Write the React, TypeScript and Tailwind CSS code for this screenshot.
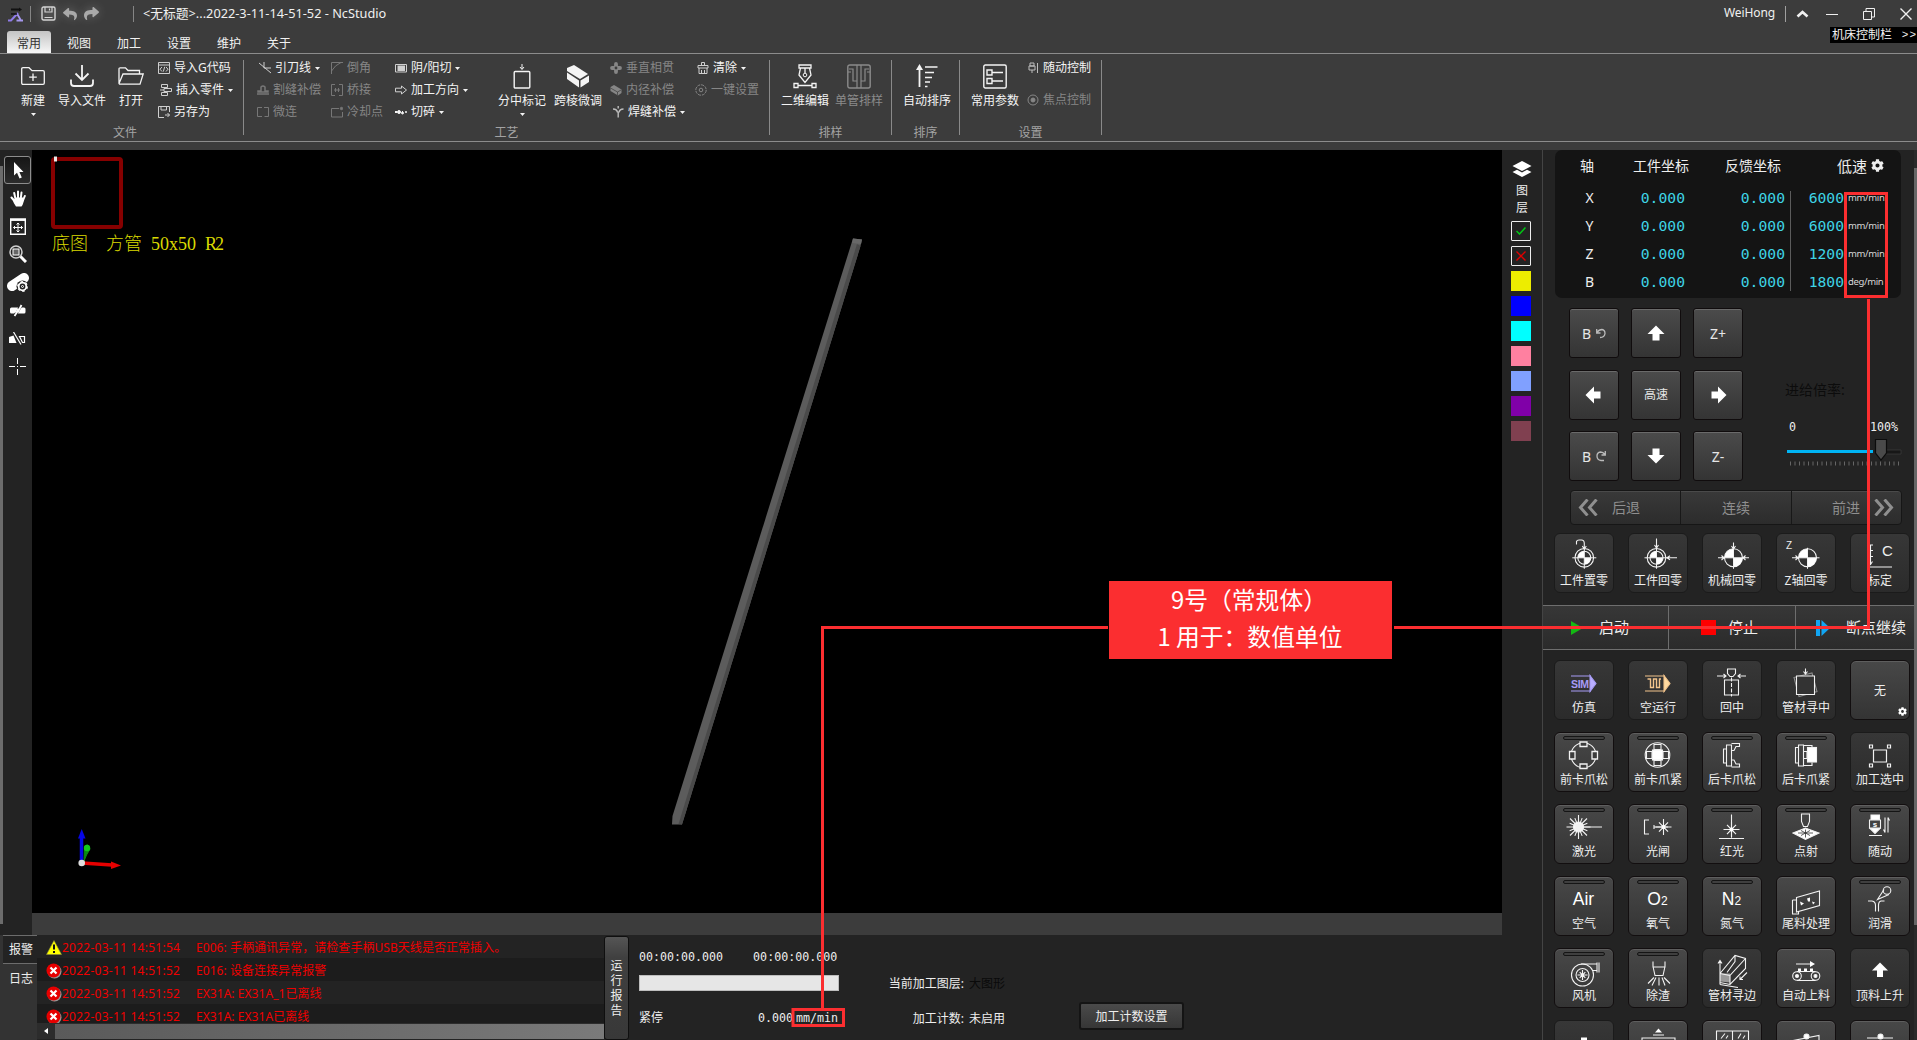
import React from "react";
import { FaReply, FaShare, FaCog } from "react-icons/fa";

type Kids = { children?: React.ReactNode };

const UI = "font-['Noto_Sans','Noto_Sans_CJK_SC',sans-serif]";
const MONO = "font-['DejaVu_Sans_Mono','Noto_Sans_CJK_SC',monospace]";

function Ico({ w, h, className, children }: { w: number; h: number; className?: string } & Kids) {
  return (
    <svg
      width={w}
      height={h}
      viewBox={`0 0 ${w} ${h}`}
      fill="none"
      stroke="currentColor"
      strokeWidth={1}
      className={"shrink-0 " + (className ?? "")}
    >
      {children}
    </svg>
  );
}

function Caret() {
  return (
    <Ico w={5} h={3}>
      <path d="M0 0H5L2.5 3Z" fill="currentColor" stroke="none" />
    </Ico>
  );
}

/* ---------- title bar ---------- */

function TitleBar() {
  return (
    <header className="flex h-[27px] shrink-0 items-center text-[#f0f0f0]">
      <Ico w={16} h={16} className="ml-2">
        <path d="M3 3.500H11" stroke="#111" strokeWidth={2} />
        <path d="M11 1.500L14 3.500L11 5.500Z" fill="#111" stroke="none" />
        <path d="M0 14.500H3L10 7" stroke="#8f7be8" strokeWidth={2} />
        <path d="M9.500 8.500L13 14.500M8.500 14.500H15" stroke="#a597ee" strokeWidth={1.800} />
        <path d="M3 8H9" stroke="#111" strokeWidth={1.500} />
      </Ico>
      <div className="ml-1.5 h-4 w-px bg-[#858585]" />
      <Ico w={15} h={15} className="ml-2.5 text-[#d4d4d4] drop-shadow-[0_0_5px_rgba(255,255,255,0.35)]">
        <rect x="1" y="1" width="13" height="13" rx="1.5" strokeWidth={1.4} />
        <path d="M4 1V6H11V1M8.5 2.5V4.5M3.5 11.5H11.5" strokeWidth={1.2} />
      </Ico>
      <FaReply size={14} className="ml-[7px] text-[#a9a9a9] drop-shadow-[0_0_5px_rgba(255,255,255,0.25)]" />
      <FaShare size={15} className="ml-[7px] text-[#a9a9a9] drop-shadow-[0_0_5px_rgba(255,255,255,0.25)]" />
      <div className="ml-[34px] h-4 w-px bg-[#858585]" />
      <span className="ml-[9px] pb-px text-[12.75px] leading-4">&lt;无标题&gt;...2022-3-11-14-51-52 - NcStudio</span>
      <div className="ml-auto flex items-center">
        <span className="pb-px text-xs leading-4 tracking-[-0.1px]">WeiHong</span>
        <div className="ml-[10px] h-4 w-px bg-[#a0a0a0]" />
        <Ico w={13} h={8} className="ml-2.5">
          <path d="M1.5 6.5L6.5 2L11.5 6.5" strokeWidth={2.6} />
        </Ico>
        <Ico w={12} h={12} className="ml-[17px]">
          <path d="M0 6.5H12" />
        </Ico>
        <Ico w={12} h={12} className="ml-[25px]">
          <path d="M.5 3.5H8.5V11.5H.5ZM3 3V.5H11.5V9H9" />
        </Ico>
        <Ico w={12} h={12} className="mr-[5px] ml-[25px]">
          <path d="M.5 .5L11.5 11.5M11.5 .5L.5 11.5" strokeWidth={1.4} />
        </Ico>
      </div>
    </header>
  );
}

function TabRow() {
  return (
    <nav className="flex h-[27px] shrink-0 items-end border-b border-[#8c8c8c] text-xs leading-4 text-[#f2f2f2]">
      <div className="ml-[7px] flex h-[22px] w-11 items-center justify-center rounded-t-[3px] bg-linear-to-b from-[#c4c4c4] to-[#f7f7f7] pt-[3px] text-[#333]">
        常用
      </div>
      <div className="ml-[3px] flex">
        {["视图", "加工", "设置", "维护", "关于"].map((t) => (
          <div key={t} className="flex h-[19px] w-[50px] items-center justify-center">
            {t}
          </div>
        ))}
      </div>
      <div className="ml-auto flex h-[26px] items-start">
        <div className="flex h-4 w-[87px] items-center justify-between bg-black pl-0.5 text-xs">
          <span>机床控制栏</span>
          <span className="font-['Liberation_Mono',monospace] text-[11px] tracking-[1px]">&gt;&gt;</span>
        </div>
      </div>
    </nav>
  );
}

/* ---------- ribbon ---------- */

function Group({ label, className, children }: { label: string; className: string } & Kids) {
  return (
    <section className={"flex h-full shrink-0 flex-col " + className}>
      <div className="flex h-[67px] shrink-0 items-start pt-[3px]">{children}</div>
      <div className="h-5 shrink-0 text-center text-xs leading-6 text-[#a3a3a3]">{label}</div>
    </section>
  );
}

function Sep() {
  return <div className="mt-1.5 h-[75px] w-px shrink-0 bg-[#8a8a8a]" />;
}

function Big({ icon, label, caret, dim, className }: { icon: React.ReactNode; label: string; caret?: boolean; dim?: boolean; className: string }) {
  return (
    <div className={"flex shrink-0 flex-col items-center pt-[5px] " + (dim ? "text-[#8b8b8b] " : "text-[#f4f4f4] ") + className}>
      <div className="flex h-[28px] items-center justify-center">{icon}</div>
      <span className="pt-px text-xs leading-5 whitespace-nowrap">{label}</span>
      {caret && (
        <span className="flex pt-0.5">
          <Caret />
        </span>
      )}
    </div>
  );
}

function Small({ icon, label, caret, dim, className }: { icon: React.ReactNode; label: string; caret?: boolean; dim?: boolean; className?: string }) {
  return (
    <div className={"flex h-[22px] items-center gap-1 text-xs whitespace-nowrap " + (dim ? "text-[#868686] " : "text-[#f4f4f4] ") + (className ?? "")}>
      {icon}
      <span className="leading-4">{label}</span>
      {caret && <Caret />}
    </div>
  );
}

const S = ({ children }: Kids) => (
  <Ico w={12} h={12} className="opacity-80">
    {children}
  </Ico>
);

function Ribbon() {
  return (
    <div className="flex h-[88px] shrink-0 border-b border-[#8c8c8c] pl-[7px]">
      <Group label="文件" className="w-[236px]">
        <Big
          className="ml-1 w-11"
          label="新建"
          caret
          icon={
            <Ico w={24} h={18}>
              <path d="M.7 2Q.7 .7 2 .7H8L11 3.7H22Q23.3 3.7 23.3 5V16Q23.3 17.3 22 17.3H2Q.7 17.3 .7 16ZM12 6.5V14M8.2 10.2H15.8" strokeWidth={1.3} />
            </Ico>
          }
        />
        <Big
          className="w-[54px]"
          label="导入文件"
          icon={
            <Ico w={24} h={24}>
              <path d="M12 1V16M5.5 9.5L12 16L18.5 9.5M1 15.5V19Q1 22 4 22H20Q23 22 23 19V15.5" strokeWidth={1.8} />
            </Ico>
          }
        />
        <Big
          className="w-11"
          label="打开"
          icon={
            <Ico w={26} h={18}>
              <path d="M1 16V2Q1 .8 2.2 .8H7.5L10 3.5H21.5V7M1 16.5L5 7H25.2L22 17.2H1.5Z" strokeWidth={1.3} />
            </Ico>
          }
        />
        <div className="ml-[5px] flex flex-col">
          <Small
            label="导入G代码"
            icon={
              <S>
                <path d="M.5 .5H11.5V11.5H.5ZM.5 3H11.5M4 5L2 7.2L4 9.5M8 5L10 7.2L8 9.5M6.7 4.8L5.3 9.6" />
              </S>
            }
          />
          <Small
            className="ml-0.5"
            label="插入零件"
            caret
            icon={
              <S>
                <path d="M1.5 .5H7.5V3.5H1.5ZM1.5 8.5H7.5V11.5H1.5ZM4 4.5H11.5V7.5H4ZM0 6H4" />
              </S>
            }
          />
          <Small
            label="另存为"
            icon={
              <S>
                <path d="M6 11.5H.5V.5H11.5V6M3 .5V4H8.5V.5M7 9H11.5M9.5 7L11.5 9L9.5 11" />
              </S>
            }
          />
        </div>
      </Group>
      <Sep />
      <Group label="工艺" className="w-[525px]">
        <div className="ml-[13px] flex w-[74px] flex-col">
          <Small
            className="ml-0.5"
            label="引刀线"
            caret
            icon={
              <S>
                <path d="M0 1L12 11M5 0V6H12" />
              </S>
            }
          />
          <Small
            dim
            label="割缝补偿"
            icon={
              <S>
                <path d="M1 7H4L4 3Q6 1 8 3V7H11V8H1ZM0 10H12" strokeWidth={1.5} />
              </S>
            }
          />
          <Small
            dim
            label="微连"
            icon={
              <S>
                <path d="M5 1.5H.5V10.5H5M7.5 10.5H11.5V1.5H7" />
              </S>
            }
          />
        </div>
        <div className="flex w-16 flex-col">
          <Small
            dim
            label="倒角"
            icon={
              <S>
                <path d="M.5 12V.5H12M.5 9Q4 3 10 .5" />
              </S>
            }
          />
          <Small
            dim
            label="桥接"
            icon={
              <S>
                <path d="M4 .5H.5V11.5H4M8 .5H11.5V11.5H8M3 6H9M4.5 4V8M7.5 4V8" />
              </S>
            }
          />
          <Small
            dim
            label="冷却点"
            icon={
              <S>
                <path d="M8 2.5H.5V11H11.5V6" />
                <circle cx="10.5" cy="2.5" r="1.2" fill="currentColor" />
              </S>
            }
          />
        </div>
        <div className="flex w-[99px] flex-col">
          <Small
            label="阴/阳切"
            caret
            icon={
              <S>
                <path d="M.5 2.5H11.5V10H.5Z" />
                <rect x="3" y="4" width="6.5" height="4.5" fill="currentColor" />
              </S>
            }
          />
          <Small
            label="加工方向"
            caret
            icon={
              <S>
                <path d="M.5 4.2H6.5V2L11.5 6L6.5 10V7.8H.5Z" />
              </S>
            }
          />
          <Small
            label="切碎"
            caret
            icon={
              <Ico w={12} h={12}>
                <path d="M0 6H2M3 6H5M7 6H8" strokeWidth={2} />
                <circle cx="4" cy="6" r="1.5" fill="currentColor" />
                <circle cx="7.5" cy="7" r="1" fill="currentColor" />
                <circle cx="11" cy="6" r=".6" fill="currentColor" />
              </Ico>
            }
          />
        </div>
        <Big
          className="w-14"
          label="分中标记"
          caret
          icon={
            <Ico w={18} h={25}>
              <rect x="1.2" y="7.5" width="15.6" height="16.5" rx="1" strokeWidth={1.4} />
              <path d="M9 0V5M7 3L9 5.5L11 3" />
            </Ico>
          }
        />
        <Big
          className="w-14"
          label="跨棱微调"
          icon={
            <Ico w={24} h={23}>
              <path d="M1 3L8 0L22 9L14 14L1 6Z" fill="currentColor" stroke="none" />
              <path d="M1 7.5L13 15.5V22.5L1 14ZM14.5 15.5L23 10.5V17L14.5 22.5Z" fill="currentColor" stroke="none" />
            </Ico>
          }
        />
        <div className="ml-1 flex w-[85px] flex-col">
          <Small
            dim
            label="垂直相贯"
            icon={
              <Ico w={12} h={12}>
                <path d="M6 2V10M2 6H10" strokeWidth={3.800} strokeLinecap="round" />
                <circle cx="6" cy="6" r="1.400" fill="#3c3c3c" stroke="none" />
              </Ico>
            }
          />
          <Small
            dim
            label="内径补偿"
            icon={
              <Ico w={12} h={12}>
                <path d="M.5 3L4 1L11.5 5.5V9L8 11.5L.5 7Z" fill="currentColor" stroke="none" />
                <path d="M.5 4L7.5 8V11M7.5 8L11 6" stroke="#3c3c3c" strokeWidth={0.7} />
              </Ico>
            }
          />
          <Small
            className="ml-0.5"
            label="焊缝补偿"
            caret
            icon={
              <Ico w={12} h={12} className="opacity-70">
                <path d="M1 3Q5 3 5.500 6.500M11.500 3Q7.500 3 7 6.500M6.200 5.500V11.500M6.200 0V2.500" strokeWidth={1.400} />
              </Ico>
            }
          />
        </div>
        <div className="flex flex-col">
          <Small
            className="ml-0.5"
            label="清除"
            caret
            icon={
              <S>
                <path d="M1 3.5H11V6H1ZM2 6V11.5H10V6M4.5 3V.5H7.5V3M4.5 8V11M7.5 8V11" />
              </S>
            }
          />
          <Small
            dim
            label="一键设置"
            icon={
              <Ico w={12} h={12}>
                <circle cx="6" cy="6" r="5.2" strokeDasharray="3 1" />
                <circle cx="6" cy="6" r="1.8" />
              </Ico>
            }
          />
        </div>
      </Group>
      <Sep />
      <Group label="排样" className="w-[121px]">
        <Big
          className="ml-[7px] w-14"
          label="二维编辑"
          icon={
            <Ico w={24} h={25}>
              <path d="M6 1H18V4H6ZM7.5 4L6 11L12 18.5L18 11L16.500 4M12 4V9M1 19.500H5V23.500H1ZM19 19.500H23V23.500H19ZM5 21.500H19" strokeWidth={1.3} />
              <circle cx="12" cy="11" r="1.8" />
            </Ico>
          }
        />
        <Big
          dim
          className="w-[52px]"
          label="单管排样"
          icon={
            <Ico w={24} h={25}>
              <rect x=".8" y="1" width="22.400" height="23" rx="2" strokeWidth={1.4} />
              <path d="M2 5H6V17H10V1M22 5H18V17H14V1M10 24V17M14 24V17M4 8H1M20 8H23" strokeWidth={1.2} />
            </Ico>
          }
        />
      </Group>
      <Sep />
      <Group label="排序" className="w-[67px]">
        <Big
          className="ml-[7px] w-14"
          label="自动排序"
          icon={
            <Ico w={22} h={24}>
              <path d="M3.500 23V4" strokeWidth={1.8} />
              <path d="M0 6L3.500 0L7 6Z" fill="currentColor" stroke="none" />
              <path d="M9 3H21.500M9 8.500H18M9 13.500H16M9 18H14M9 22.500H11.500" strokeWidth={1.6} />
            </Ico>
          }
        />
      </Group>
      <Sep />
      <Group label="设置" className="w-[141px]">
        <Big
          className="ml-[7px] w-14"
          label="常用参数"
          icon={
            <Ico w={24} h={25}>
              <rect x=".8" y="1" width="22.400" height="23" rx="1.500" strokeWidth={1.4} />
              <path d="M4 6H9V11H4ZM4 14.500H9V19.500H4ZM9 8.500H20M9 17H20" strokeWidth={1.4} />
            </Ico>
          }
        />
        <div className="ml-1 flex flex-col gap-2.5">
          <Small
            label="随动控制"
            icon={
              <Ico w={12} h={12} className="opacity-70">
                <path d="M3 1H7V4H3ZM2 4H8V8H2ZM5 8V11M10.500 1V11" />
              </Ico>
            }
          />
          <Small
            dim
            label="焦点控制"
            icon={
              <Ico w={12} h={12}>
                <circle cx="6" cy="6" r="5" />
                <circle cx="6" cy="6" r="2" fill="currentColor" />
              </Ico>
            }
          />
        </div>
      </Group>
      <Sep />
    </div>
  );
}

/* ---------- left tool strip ---------- */

function Tool({ active, children }: { active?: boolean } & Kids) {
  return (
    <div
      className={
        "flex h-7 w-[27px] items-center justify-center text-white " +
        (active ? "rounded-[3px] border border-[#8d8d8d] bg-linear-to-b from-[#161616] to-[#2c2c2c]" : "")
      }
    >
      {children}
    </div>
  );
}

function ToolStrip() {
  return (
    <aside className="flex w-[29px] shrink-0 flex-col items-center bg-[#232323] pt-1.5">
      <Tool active>
        <Ico w={11} h={17} className="ml-0.5">
          <path d="M1 0V13.500L4 10.800L6.500 16.500L8.800 15.500L6.400 10H10.500Z" fill="currentColor" stroke="none" />
        </Ico>
      </Tool>
      <Tool>
        <Ico w={16} h={17}>
          <path d="M4.500 11L1.500 7.500M5.500 9L4.200 3M8 8.500V1.500M10.700 9L11.500 2.500M13 10.500L14.800 6" strokeWidth={2} strokeLinecap="round" />
          <path d="M2 8L5 9.500L5 7.500H13L14 10Q13 15 11.500 16.500H6Q3.500 13.500 2 8Z" fill="currentColor" stroke="none" />
        </Ico>
      </Tool>
      <Tool>
        <Ico w={16} h={17}>
          <path d="M.7 2H15.300V16.300H.7Z" strokeWidth={1.400} />
          <path d="M0 1.500H16" strokeWidth={2.500} />
          <path d="M8 5V14M3.500 9.500H12.500M6.500 6.500L8 5L9.500 6.500M6.500 12.500L8 14L9.500 12.500M5 8L3.500 9.500L5 11M11 8L12.500 9.500L11 11" />
        </Ico>
      </Tool>
      <Tool>
        <Ico w={18} h={18}>
          <circle cx="7" cy="7" r="6" stroke="#d0d0d0" strokeWidth={1.500} />
          <rect x="4" y="4" width="6" height="6" fill="#666" />
          <path d="M11.500 11.500L17 17" strokeWidth={3} />
        </Ico>
      </Tool>
      <Tool>
        <Ico w={22} h={19} className="ml-px">
          <path d="M5 13L17 5" strokeWidth={10} strokeLinecap="round" />
          <circle cx="15.500" cy="13.500" r="6" fill="#232323" stroke="none" />
          <circle cx="15.500" cy="13.500" r="3.800" strokeWidth={1.800} />
          <circle cx="15.500" cy="13.500" r="4.800" strokeWidth={1.200} strokeDasharray="2.500 2.500" />
          <circle cx="15.500" cy="13.500" r="1" />
        </Ico>
      </Tool>
      <Tool>
        <Ico w={16} h={13}>
          <rect x="0" y="3.500" width="15.500" height="6" rx="1.500" fill="currentColor" stroke="none" />
          <path d="M4 13L12 0" stroke="#232323" strokeWidth={3} />
          <path d="M4.500 12L7.500 7.500L9 6L11.500 1M5 7.500H8L7 5.500H10.500" strokeWidth={1.800} />
        </Ico>
      </Tool>
      <Tool>
        <Ico w={17} h={13}>
          <path d="M0 11V5L4.500 3.500L7.500 11Z" fill="currentColor" stroke="none" />
          <path d="M4.500 0L12 12.500" strokeWidth={1.200} />
          <path d="M10.500 4.500H15.500V10.500H13.500Z" strokeWidth={1.200} />
        </Ico>
      </Tool>
      <Tool>
        <Ico w={17} h={17}>
          <path d="M8.500 0V6M8.500 11V17M0 8.500H6M11 8.500H17M8.500 8V9" />
        </Ico>
      </Tool>
    </aside>
  );
}

/* ---------- drawing canvas ---------- */

function Canvas() {
  return (
    <div className="relative h-[763px] bg-black">
      <svg width="1470" height="763" viewBox="32 150 1470 763" className="block" fill="none">
        <rect x="53" y="159" width="68" height="68" rx="2" stroke="#860000" strokeWidth="4" />
        <rect x="54" y="156.500" width="3" height="5" fill="#e8e8e8" />
        <path d="M853 238.500L862 239.500L860.500 246L682 824.500H672L672.500 816Z" fill="#5c5c5c" />
        <path d="M860.500 246L682 824.500L678.500 824L857 244Z" fill="#4a4a4a" />
        <path d="M853 238.500L862 239.500L861 244L852 243Z" fill="#686868" />
        <path d="M84 861L84.500 847Q88 842 90 849L86.500 855Z" fill="#0b8a12" stroke="#0b8a12" strokeWidth="1" />
        <circle cx="87" cy="848" r="3.200" fill="#13c61d" />
        <path d="M81.500 862V836" stroke="#0606e6" strokeWidth="3.500" />
        <path d="M78 838.500L81.700 829L85.500 838.500Z" fill="#0606e6" />
        <path d="M82 863L112 865" stroke="#e60000" strokeWidth="3.500" />
        <path d="M111 861.500L121 865.500L111 869Z" fill="#e60000" />
        <circle cx="81.700" cy="863" r="3.300" fill="#dedede" />
      </svg>
      <div className="absolute top-[82px] left-[20px] font-['Liberation_Serif','Noto_Sans_CJK_SC',serif] text-[18px] leading-6 font-light whitespace-pre text-[#d9d900] [word-spacing:4.5px]">
        底图{"  "}方管 50x50 <span className="tracking-[-2px]">R</span>2
      </div>
    </div>
  );
}

const swatches = [
  "bg-[#eded00]",
  "bg-[#0000ff]",
  "bg-[#00ffff]",
  "bg-[#ff80a0]",
  "bg-[#80a0ff]",
  "bg-[#8000a8]",
  "bg-[#804050]",
];

function LayerColumn() {
  return (
    <aside className="flex w-10 shrink-0 flex-col bg-[#232323] pl-[9px] text-white">
      <Ico w={20} h={17} className="mt-[11px] ml-px">
        <path d="M10 0L19.500 5L10 10L.5 5Z" fill="currentColor" stroke="none" />
        <path d="M.5 11L5 8.800L10 11.500L15 8.800L19.500 11L10 16Z" fill="currentColor" stroke="none" />
      </Ico>
      <div className="mt-1 ml-[5px] w-3 text-xs leading-[17px] text-[#eee]">图层</div>
      <div className="mt-[5px] flex flex-col gap-[5px]">
        <div className="flex size-5 items-center justify-center rounded-[1px] border border-[#eee]">
          <Ico w={10} h={8} className="text-[#00c814]">
            <path d="M.5 4L3.500 7L9.500 .5" strokeWidth={1.500} />
          </Ico>
        </div>
        <div className="flex size-5 items-center justify-center rounded-[1px] border border-[#eee]">
          <Ico w={10} h={10} className="text-[#e00000]">
            <path d="M.5 .5L9.500 9.500M9.500 .5L.5 9.500" strokeWidth={1.400} />
          </Ico>
        </div>
        {swatches.map((c) => (
          <div key={c} className={"size-5 " + c} />
        ))}
      </div>
    </aside>
  );
}

/* ---------- bottom panel ---------- */

const logs = [
  { warn: true, time: "2022-03-11 14:51:54", msg: "E006: 手柄通讯异常，请检查手柄USB天线是否正常插入。" },
  { warn: false, time: "2022-03-11 14:51:52", msg: "E016: 设备连接异常报警" },
  { warn: false, time: "2022-03-11 14:51:52", msg: "EX31A: EX31A_1已离线" },
  { warn: false, time: "2022-03-11 14:51:52", msg: "EX31A: EX31A已离线" },
];

function BottomPanel() {
  return (
    <div className="flex h-[105px] w-[1542px] bg-[#232323] text-xs text-[#eee]">
      <div className="flex w-[37px] shrink-0 flex-col bg-[#333] pl-[3px] leading-4">
        <div className="flex h-[29px] items-center justify-center border-y border-[#6c6c6c] bg-[#232323] pl-0.5">报警</div>
        <div className="flex h-[30px] items-center justify-center pl-0.5">日志</div>
      </div>
      <div className="flex w-[567px] shrink-0 flex-col overflow-hidden text-[#f00000]">
        <div className="h-[88px] overflow-hidden">
          {logs.map((l, i) => (
            <div key={i} className={"flex h-[23px] items-center pt-0.5 pl-[9px] whitespace-nowrap " + (i % 2 ? "bg-[#1c1c1c]" : "bg-[#232323]")}>
              {l.warn ? (
                <Ico w={16} h={16}>
                  <path d="M8 .5L15.500 14.500H.5Z" fill="#ffff00" stroke="#8a8a40" strokeWidth={0.600} />
                  <path d="M8 4.500V9.500M8 11V13" stroke="#111" strokeWidth={2} />
                </Ico>
              ) : (
                <Ico w={16} h={16}>
                  <circle cx="8.500" cy="8.500" r="7" fill="#999" stroke="none" />
                  <circle cx="7.500" cy="7.500" r="7" fill="#e60000" stroke="none" />
                  <path d="M4.500 4.500L10.500 10.500M10.500 4.500L4.500 10.500" stroke="#fff" strokeWidth={2.200} />
                </Ico>
              )}
              <span className="w-[134px] tracking-[0.25px]">{l.time}</span>
              <span className="tracking-[0.05px]">{l.msg}</span>
            </div>
          ))}
        </div>
        <div className="flex h-4 items-center bg-[#2c2c2c] text-white">
          <Ico w={4} h={6} className="ml-[7px]">
            <path d="M4 0V6L0 3Z" fill="currentColor" stroke="none" />
          </Ico>
          <div className="ml-[7px] h-[15px] flex-1 bg-linear-to-r from-[#5a5a5a] to-[#7a7a7a]" />
        </div>
      </div>
      <div className="mt-px flex h-[104px] w-[25px] shrink-0 items-center justify-center rounded-[3px] border border-[#0f0f0f] bg-linear-to-b from-[#555] via-[#404040] via-20% to-[#383838]">
        <span className="w-3 text-xs leading-[15px]">运行报告</span>
      </div>
      <div className="ml-[10px] flex w-[230px] shrink-0 flex-col">
        <div className={"mt-[14px] flex gap-[30px] text-[11.650px] leading-4 " + MONO}>
          <span>00:00:00.000</span>
          <span>00:00:00.000</span>
        </div>
        <div className="mt-2.5 h-4 w-[200px] border border-[#bdbdbd] bg-[#e6e6e6]" />
        <div className="mt-[19px] flex items-center leading-4">
          <span>紧停</span>
          <span className={"ml-auto flex w-[111px] text-[11.650px] " + MONO}>
            <span className="w-[38px]">0.000</span>
            <span>mm/min</span>
          </span>
        </div>
      </div>
      <div className="ml-[20px] flex w-[116px] shrink-0 flex-col pt-[41px] leading-4 whitespace-nowrap">
        <div className="flex justify-end gap-[5px]">
          <span>当前加工图层:</span>
          <span className="w-9 text-[#0a0a0a]">大图形</span>
        </div>
        <div className="mt-[19px] flex justify-end gap-[5px]">
          <span>加工计数:</span>
          <span className="w-9">未启用</span>
        </div>
      </div>
      <div className="mt-[67px] ml-[74px] flex h-7 w-[105px] items-center justify-center rounded-[3px] border-2 border-[#141414] bg-linear-to-b from-[#4a4a4a] to-[#363636] pt-0.5">
        加工计数设置
      </div>
    </div>
  );
}

/* ---------- right control panel ---------- */

const axes = [
  ["X", "0.000", "0.000", "6000", "mm/min"],
  ["Y", "0.000", "0.000", "6000", "mm/min"],
  ["Z", "0.000", "0.000", "1200", "mm/min"],
  ["B", "0.000", "0.000", "1800", "deg/min"],
];

function AxisPanel() {
  return (
    <div className="ml-[12px] h-[148px] w-[346px] shrink-0 rounded-[7px] bg-[#141414] text-[#eee]">
      <div className="flex h-[31px] items-center text-sm leading-5">
        <span className="ml-[25px] w-[53px]">轴</span>
        <span className="w-[92px]">工件坐标</span>
        <span className="w-28">反馈坐标</span>
        <span className="mr-1 text-[15px]">低速</span>
        <FaCog size={13} />
      </div>
      <div className="relative pt-px">
        <div className="absolute top-[10px] left-[235px] h-[100px] w-px bg-[#5c5c5c]" />
        {axes.map((a) => (
          <div key={a[0]} className={"flex h-7 items-center pt-1 text-[14.700px] text-[#3fd5e6] " + MONO}>
            <span className={"ml-[25px] w-[19px] text-center text-sm text-[#eee] " + UI}>{a[0]}</span>
            <span className="w-[86px] text-right">{a[1]}</span>
            <span className="w-[100px] text-right">{a[2]}</span>
            <span className="w-[59px] text-right">{a[3]}</span>
            <span className="ml-1 font-['Noto_Sans',sans-serif] text-[9.500px] tracking-[-0.35px] text-[#d8d8d8]">{a[4]}</span>
          </div>
        ))}
      </div>
    </div>
  );
}

function Key({ children }: Kids) {
  return (
    <div className="flex size-[50px] items-center justify-center gap-[5px] rounded-[3px] border border-[#100c0d] bg-linear-to-b from-[#4b4b4b] to-[#343434] text-[14px] text-[#e6e6e6] shadow-[inset_0_1px_0_#6a6a6a]">
      {children}
    </div>
  );
}

const arrowTurns = { up: "", right: "ml-0.5 rotate-90", down: "rotate-180", left: "mr-[3px] -rotate-90" };

function Arrow({ dir }: { dir: keyof typeof arrowTurns }) {
  return (
    <Ico w={18} h={16} className={"text-white " + arrowTurns[dir]}>
      <path d="M9 .5L17.500 9H12.500V15.500H5.500V9H.5Z" fill="currentColor" stroke="none" />
    </Ico>
  );
}

function Jog() {
  return (
    <div className="mt-[10px] flex shrink-0 pl-[26px]">
      <div className="grid grid-cols-3 gap-x-3 gap-y-[11.500px]">
        <Key>
          <span>B</span>
          <Ico w={10} h={11} className="text-[#bbb]">
            <path d="M.7 1V5H4.500M1 4.500Q3 1.500 6 1.500Q9 2 9 5.500Q8.500 9.500 4 9.500" strokeWidth={1.300} />
          </Ico>
        </Key>
        <Key>
          <Arrow dir="up" />
        </Key>
        <Key>Z+</Key>
        <Key>
          <Arrow dir="left" />
        </Key>
        <Key>
          <span className="text-xs">高速</span>
        </Key>
        <Key>
          <Arrow dir="right" />
        </Key>
        <Key>
          <span>B</span>
          <Ico w={10} h={11} className="text-[#bbb]">
            <path d="M9.300 0V4H5.500M9 3.500Q7 1 4.500 1Q1 1.500 1 5Q1 9 5 9.500H8" strokeWidth={1.300} />
          </Ico>
        </Key>
        <Key>
          <Arrow dir="down" />
        </Key>
        <Key>Z-</Key>
      </div>
      <div className="ml-[42px] flex w-[120px] flex-col pt-[73px]">
        <span className="text-sm leading-[18px] text-[#0c0c0c]">进给倍率:</span>
        <div className={"mt-5 flex w-[113px] justify-between pl-[4px] text-[11.650px] leading-4 text-[#eee] " + MONO}>
          <span>0</span>
          <span>100%</span>
        </div>
        <Ico w={118} h={30} className="mt-0.5">
          <path d="M98 13H116V17H98" fill="#171717" stroke="#3a3a3a" strokeWidth={0.800} />
          <path d="M2 14.500H88" stroke="#00b4f4" strokeWidth={3} />
          <path d="M90.500 2.500H101.500V16L96 23L90.500 16Z" fill="#4a4a4a" stroke="#0c0c0c" strokeWidth={1.200} />
          <path d="M5 26.500H115" stroke="#666" strokeWidth={4} strokeDasharray="1 3.500" />
        </Ico>
      </div>
    </div>
  );
}

const TILE_FLAT = "border-[#1b1b1b] bg-linear-to-b from-[#373737] to-[#2b2b2b]";
const TILE_RAISED = "border-[#120e0f] bg-linear-to-b from-[#484848] to-[#343434] shadow-[inset_0_1px_0_#5e5e5e]";

type TileProps = { label: string; icon?: React.ReactNode; raised?: boolean; led?: boolean };

function Tile({ label, icon, raised, led }: TileProps) {
  return (
    <div className={"relative h-[60px] w-[60px] overflow-hidden rounded-[6px] border " + (raised || led ? TILE_RAISED : TILE_FLAT)}>
      {led && <div className="absolute top-[3px] left-[8px] h-[4px] w-[42px] rounded-[2px] border border-[#151515] bg-[#3f3f3f]" />}
      <svg width="58" height="39" viewBox="1 0.500 58 39" fill="none" stroke="#f2f2f2" strokeWidth="1.100" className="block">
        {icon}
      </svg>
      <div className="text-center text-xs leading-[15px] whitespace-nowrap text-[#eee]">{label}</div>
    </div>
  );
}

function Target({ x, y, rings }: { x: number; y: number; rings?: boolean }) {
  const r = rings ? 6.5 : 9;
  return (
    <g transform={`translate(${x} ${y})`}>
      {rings && <circle r="9.300" />}
      <circle r={r} />
      <path d={`M0 0V${-r}A${r} ${r} 0 0 0 ${-r} 0ZM0 0V${r}A${r} ${r} 0 0 0 ${r} 0Z`} fill="#fff" stroke="none" />
      <path d="M-12 0H12M0 -10V11" strokeWidth="1" />
    </g>
  );
}

function Star({ x, y, r, n }: { x: number; y: number; r: number; n: number }) {
  let d = "";
  for (let i = 0; i < n; i++) {
    const a = (Math.PI * 2 * i) / n;
    const k = i % 2 ? r * 0.8 : r;
    d += `M${x} ${y}L${(x + Math.cos(a) * k).toFixed(2)} ${(y + Math.sin(a) * k).toFixed(2)}`;
  }
  return <path d={d} />;
}

const zeroTiles: TileProps[] = [
  {
    label: "工件置零",
    icon: (
      <>
        <Target x={30.3} y={24.3} rings />
        <path d="M22.500 11V8Q23 6.500 25 6.500H27.500Q30.300 6.500 30.300 10V15M28.300 12.500L30.300 15.500L32.300 12.500" />
      </>
    ),
  },
  {
    label: "工件回零",
    icon: (
      <>
        <Target x={28.5} y={24.3} rings />
        <path d="M28.500 5V14M26.500 11.500L28.500 14.500L30.500 11.500M49 24.300H39M42 22.300L39 24.300L42 26.300" />
      </>
    ),
  },
  {
    label: "机械回零",
    icon: (
      <>
        <Target x={31.5} y={24.3} />
        <path d="M31.500 9V15M29.500 12.500L31.500 15.500L33.500 12.500M16 24.300H22M19.500 22L22 24.300L19.500 26.500M47 24.300H41M43.500 22L41 24.300L43.500 26.500" />
      </>
    ),
  },
  {
    label: "Z轴回零",
    icon: (
      <>
        <Target x={31.5} y={24.3} />
        <path d="M16 24.300H22M19.500 22L22 24.300L19.500 26.500" />
        <text x="10" y="15" fill="#eee" stroke="none" fontSize="10" fontFamily="Liberation Sans">
          Z
        </text>
      </>
    ),
  },
  {
    label: "标定",
    icon: (
      <>
        <path d="M20.500 11V31M20.500 11.500H23M20.500 17H23M20.500 23H23M18.500 28L20.500 31L22.500 28M19 33.500H42" />
        <text x="32" y="22" fill="#eee" stroke="none" fontSize="15" fontFamily="Liberation Sans">
          C
        </text>
      </>
    ),
  },
];

const gas = (t: string, sub?: string) => (
  <text x="29.500" y="28.500" textAnchor="middle" fill="#fff" stroke="none" fontSize="17.500" fontFamily="Liberation Sans">
    {t}
    {sub && <tspan fontSize="12">{sub}</tspan>}
  </text>
);

const tiles: (TileProps & { plain?: boolean })[] = [
  {
    label: "仿真",
    icon: (
      <g stroke="#a79bf5">
        <path d="M17 15.500H37M17 30.500H37" />
        <path d="M36 15L42 23L36 31Z" fill="#b9aeff" />
        <text x="17" y="27" fill="#a79bf5" stroke="none" fontSize="10.500" fontWeight="bold" fontFamily="Liberation Sans" textLength="18">
          SIM
        </text>
      </g>
    ),
  },
  {
    label: "空运行",
    icon: (
      <g stroke="#f2c48c">
        <path d="M17 15.500H37M17 30.500H37" />
        <path d="M36 15L42 23L36 31Z" fill="#ffd9a0" />
        <path d="M19.500 18.500H22.500V27H25.500V18.500H28.500V27H31.500V18.500H33" strokeWidth="1.400" />
      </g>
    ),
  },
  {
    label: "回中",
    icon: (
      <>
        <path d="M25.500 8.500H33.500V13L31 16H28L25.500 13ZM22.500 19.500H36.500V34.500H22.500ZM15 15.500H24M21.500 13.500L24 15.500L21.500 17.500M44 15.500H36M38.500 13.500L36 15.500L38.500 17.500" />
        <path d="M29.500 17V36" strokeDasharray="4 1.500" />
      </>
    ),
  },
  {
    label: "管材寻中",
    icon: (
      <>
        <path d="M18 17L36 12.500L41 31L23 36Z" stroke="#8c8c8c" />
        <path d="M20.500 15.500H38.500V34H20.500Z" fill="#333" />
        <path d="M29.500 8V13.500M27.500 11L29.500 13.500L31.500 11" />
      </>
    ),
  },
  { label: "无", plain: true, raised: true },
  {
    label: "前卡爪松",
    led: true,
    icon: (
      <>
        <circle cx="29.500" cy="22.700" r="12.500" />
        <path d="M26 9.500H33V14H26ZM26 31.500H33V36H26ZM15.500 19H21V26.500H15.500ZM38 19H43.500V26.500H38Z" fill="#3c3c3c" strokeWidth="1.300" />
      </>
    ),
  },
  {
    label: "前卡爪紧",
    led: true,
    icon: (
      <>
        <circle cx="29.500" cy="22.500" r="12.300" />
        <path d="M26 12H33V17H26ZM26 28H33V33H26ZM18.500 19H24V26H18.500ZM35 19H40.500V26H35Z" />
        <rect x="24.500" y="17.500" width="10" height="10" fill="#fff" />
      </>
    ),
  },
  {
    label: "后卡爪松",
    led: true,
    icon: <path d="M21.500 16.500H24.500V30.500H21.500ZM24.500 12.500H29.500V33.500H24.500ZM29.500 11H37.500V14H34L32 18H29.500M29.500 34.500H37.500V31.500H34L32 27.500H29.500" />,
  },
  {
    label: "后卡爪紧",
    led: true,
    icon: (
      <>
        <path d="M19.500 15H22.500V30.500H19.500ZM22.500 12.500H27.500V33.500H22.500ZM27.500 13H36V15M27.500 33H36V30M27.500 19H31V26H27.500" />
        <rect x="31.500" y="15" width="9" height="14.500" fill="#fff" />
      </>
    ),
  },
  {
    label: "加工选中",
    icon: (
      <path d="M23.500 17.500H36.500V29.500H23.500ZM19.500 12.500H22.500V15.500H19.500ZM37.500 12.500H40.500V15.500H37.500ZM19.500 31.500H22.500V34.500H19.500ZM37.500 31.500H40.500V34.500H37.500Z" strokeWidth="1.200" />
    ),
  },
  {
    label: "激光",
    led: true,
    icon: (
      <>
        <circle cx="24.500" cy="22.500" r="5" fill="#fff" />
        <Star x={24.5} y={22.5} r={12} n={16} />
        <path d="M24 22.500H48" />
      </>
    ),
  },
  {
    label: "光闸",
    led: true,
    icon: (
      <>
        <path d="M21 15.500H16.500V29.500H21M26 22.500H40M26 20.500V24.500" />
        <Star x={35.5} y={22.5} r={8} n={8} />
        <circle cx="35.500" cy="22.500" r="2" fill="#fff" stroke="none" />
      </>
    ),
  },
  {
    label: "红光",
    led: true,
    icon: (
      <>
        <path d="M29.500 10V33M17 34H42" />
        <Star x={29.5} y={25} r={8} n={8} />
        <circle cx="29.500" cy="25" r="2" fill="#fff" stroke="none" />
      </>
    ),
  },
  {
    label: "点射",
    led: true,
    icon: (
      <>
        <path d="M25.500 9.500H33.500V17L31.500 22H27.500L25.500 17Z" />
        <path d="M17 28.500L29.500 23.500L43 28.500L29.500 35Z" fill="#fff" />
        <path d="M22 28.500H37M25 26L34 31M34 26L25 31M29.500 25V33" stroke="#333" strokeWidth=".8" />
      </>
    ),
  },
  {
    label: "随动",
    led: true,
    icon: (
      <>
        <path d="M21 10.500H29.500V15H21ZM20 24H30L25 29Z" fill="#fff" />
        <path d="M19.500 15.500H30.500V23.500H19.500ZM19 31H32M35 13V28M38 13V28M35 28L33.500 25M38 13L39.500 16" />
        <text x="22.800" y="22.500" fill="#fff" stroke="none" fontSize="8" fontWeight="bold" fontFamily="Liberation Sans">
          s
        </text>
      </>
    ),
  },
  { label: "空气", led: true, icon: gas("Air") },
  { label: "氧气", led: true, icon: gas("O", "2") },
  { label: "氮气", led: true, icon: gas("N", "2") },
  {
    label: "尾料处理",
    raised: true,
    icon: (
      <>
        <path d="M20.500 21L43.500 14.500V29L20.500 35.500ZM16.500 23.500H20.500M16.500 23.500V37.500H22.500V35" />
        <path d="M24 25L28 27L25 29ZM31 22L34 21V25H32ZM36 25L39 26L37 28Z" fill="#fff" stroke="none" />
      </>
    ),
  },
  {
    label: "润滑",
    led: true,
    icon: (
      <>
        <circle cx="37" cy="14" r="3.800" />
        <path d="M34 13L27.500 23L39 18M18 24.500H22Q25.500 25 25.500 29V35M34.500 24.500H31Q28.500 25 28.500 29V35" />
      </>
    ),
  },
  {
    label: "风机",
    led: true,
    icon: (
      <>
        <circle cx="28.500" cy="26.500" r="11" />
        <circle cx="28.500" cy="26.500" r="6.500" />
        <Star x={28.5} y={26.5} r={5} n={8} />
        <path d="M27 15.500H43V22H38M43 14V24M45 14V24" />
      </>
    ),
  },
  {
    label: "除渣",
    led: true,
    icon: (
      <path d="M25 13V18L27 27H35L37 18V13M24.500 18.500H37.500M31 29V37M28 29L24 37M34 29L37 37M26 29L20 35M36 29L42 35" />
    ),
  },
  {
    label: "管材寻边",
    icon: (
      <>
        <path d="M18 25H28V34L18 33Z" fill="#999" stroke="none" />
        <path d="M18 12V36M16 15L18 12L20 15M18 25L33 7L43.500 10V20L28 36L18 34M28 36V27L43.500 10M18 25L28 27M33 7V13L25 24M18 36L36 39M45 24L38 31M38 28V31H41" />
      </>
    ),
  },
  {
    label: "自动上料",
    raised: true,
    icon: (
      <>
        <path d="M20 15.500H36" />
        <path d="M34 12.500L39 15.500L34 18.500ZM22 20H25V23H22ZM28 20H31V23H28ZM34 20H37V23H34Z" fill="#fff" stroke="none" />
        <circle cx="21" cy="27.500" r="4.300" />
        <circle cx="39.500" cy="27.500" r="4.300" />
        <circle cx="21" cy="27.500" r="1.500" fill="#fff" />
        <circle cx="39.500" cy="27.500" r="1.500" fill="#fff" />
        <path d="M21 23H39.500M21 32H39.500" />
      </>
    ),
  },
  { label: "顶料上升", icon: <path d="M30 14L38 22H33V28.500H27V22H22Z" fill="#fff" stroke="none" /> },
  { label: "", icon: <path d="M27 17H33V25H27Z" fill="#fff" stroke="none" /> },
  {
    label: "",
    raised: true,
    icon: (
      <>
        <path d="M30.500 8L34 12H27Z" fill="#fff" stroke="none" />
        <path d="M25 14.500H36M14 19.500V17.500H47V19.500" />
      </>
    ),
  },
  {
    label: "",
    raised: true,
    icon: <path d="M14.500 22V10.500H46.500V22M30.500 10.500V22M19 18L23 13M36 18L39 13M24 18L26 15M41 18L43 15" />,
  },
  {
    label: "",
    raised: true,
    icon: (
      <>
        <path d="M17 20L43 15V22M17 20V22" />
        <circle cx="30.500" cy="16" r="2.500" fill="#fff" />
      </>
    ),
  },
  {
    label: "",
    raised: true,
    icon: (
      <>
        <path d="M17 17.500H43" />
        <circle cx="30.500" cy="16" r="2.500" fill="#fff" />
      </>
    ),
  },
];

function ControlPanel() {
  return (
    <aside className="flex w-[372px] shrink-0 flex-col overflow-hidden border-l border-[#444] bg-[#232323]">
      <AxisPanel />
      <Jog />
      <div className="mt-[9px] ml-[27px] flex h-[35px] w-[332px] shrink-0 items-center rounded-[4px] border border-[#161616] bg-linear-to-b from-[#393939] to-[#2c2c2c] text-sm text-[#8f8f8f] shadow-[inset_0_1px_0_#4a4a4a]">
        <div className="flex h-full w-[110px] items-center border-r border-[#181818] pl-[7px]">
          <Ico w={20} h={17}>
            <path d="M9.500 .5L2.500 8.500L9.500 16.500M18.500 .5L11.500 8.500L18.500 16.500" strokeWidth={3} />
          </Ico>
          <span className="ml-3.5">后退</span>
        </div>
        <div className="flex h-full w-[111px] items-center justify-center border-r border-[#181818]">连续</div>
        <div className="flex h-full flex-1 items-center justify-end pr-[7px]">
          <span className="mr-3.5">前进</span>
          <Ico w={20} h={17}>
            <path d="M1.500 .5L8.500 8.500L1.500 16.500M10.500 .5L17.500 8.500L10.500 16.500" strokeWidth={3} />
          </Ico>
        </div>
      </div>
      <div className="mt-[8px] ml-[11px] flex shrink-0 gap-[14px]">
        {zeroTiles.map((t) => (
          <Tile key={t.label} {...t} />
        ))}
      </div>
      <div className="mt-[12px] flex h-[45px] shrink-0 border-y border-[#6e6e6e] bg-linear-to-b from-[#373737] to-[#2b2b2b] text-[15px] text-[#eee]">
        <div className="flex w-[126px] items-center border-r border-[#6e6e6e] pl-[28px]">
          <Ico w={12} h={14}>
            <path d="M0 0L12 7L0 14Z" fill="#13b913" stroke="none" />
          </Ico>
          <span className="ml-4">启动</span>
        </div>
        <div className="flex w-[127px] items-center border-r border-[#6e6e6e] pl-[32px]">
          <div className="size-[15px] bg-[#fe0000]" />
          <span className="ml-[12px]">停止</span>
        </div>
        <div className="flex flex-1 items-center pl-5">
          <Ico w={14} h={16}>
            <path d="M0 0H4V16H0ZM5.500 0L14 8L5.500 16Z" fill="#12a5f2" stroke="none" />
          </Ico>
          <span className="ml-4 whitespace-nowrap">断点继续</span>
        </div>
      </div>
      <div className="mt-[10px] ml-[11px] grid shrink-0 grid-cols-[repeat(5,60px)] gap-x-[14px] gap-y-3">
        {tiles.map((t, i) =>
          t.plain ? (
            <div key={i} className={"flex h-[60px] w-[60px] flex-col items-center rounded-[6px] border pt-[21px] text-xs leading-[18px] text-[#eee] " + TILE_RAISED}>
              {t.label}
              <FaCog size={9} className="mt-[7px] mr-[2px] self-end text-white" />
            </div>
          ) : (
            <Tile key={i} {...t} />
          ),
        )}
      </div>
    </aside>
  );
}

/* ---------- annotation overlay ---------- */

function Callout() {
  return (
    <>
      <svg width="1917" height="1040" className="pointer-events-none absolute inset-0" fill="none" stroke="#fb2e30" strokeWidth="3">
        <path d="M1108 627.500H822.500V1008M1394 627.500H1868.500V299" />
        <rect x="1845.500" y="193.500" width="41" height="103" />
        <rect x="793" y="1009.500" width="50.500" height="16" />
      </svg>
      <div className="absolute top-[581px] left-[1109px] flex h-[78px] w-[283px] flex-col items-center bg-[#fb2e30] font-['Noto_Sans_CJK_SC',sans-serif] text-[23.800px] leading-[37px] whitespace-nowrap text-white">
        <span className="-mt-px mr-[3px]">9号（常规体）</span>
        <span className="mr-px">1 用于：数值单位</span>
      </div>
    </>
  );
}

export default function App() {
  return (
    <div className={"relative flex h-[1040px] w-[1917px] flex-col overflow-hidden bg-[#3c3c3c] " + UI}>
      <TitleBar />
      <TabRow />
      <Ribbon />
      <div className="mt-2 flex h-[890px]">
        <div className="flex w-[1542px] shrink-0 flex-col">
          <div className="flex h-[785px]">
            <div className="w-[3px] shrink-0 bg-[#232323] pt-4">
              <div className="h-[758px] bg-[#6c6c6c]" />
            </div>
            <ToolStrip />
            <div className="flex w-[1470px] flex-col">
              <Canvas />
            </div>
            <LayerColumn />
          </div>
          <BottomPanel />
        </div>
        <ControlPanel />
        <div className="flex w-[3px] flex-col bg-[#2a2a2a] pt-[18px]">
          <div className="h-[757px] bg-[#666]" />
        </div>
      </div>
      <Callout />
    </div>
  );
}
